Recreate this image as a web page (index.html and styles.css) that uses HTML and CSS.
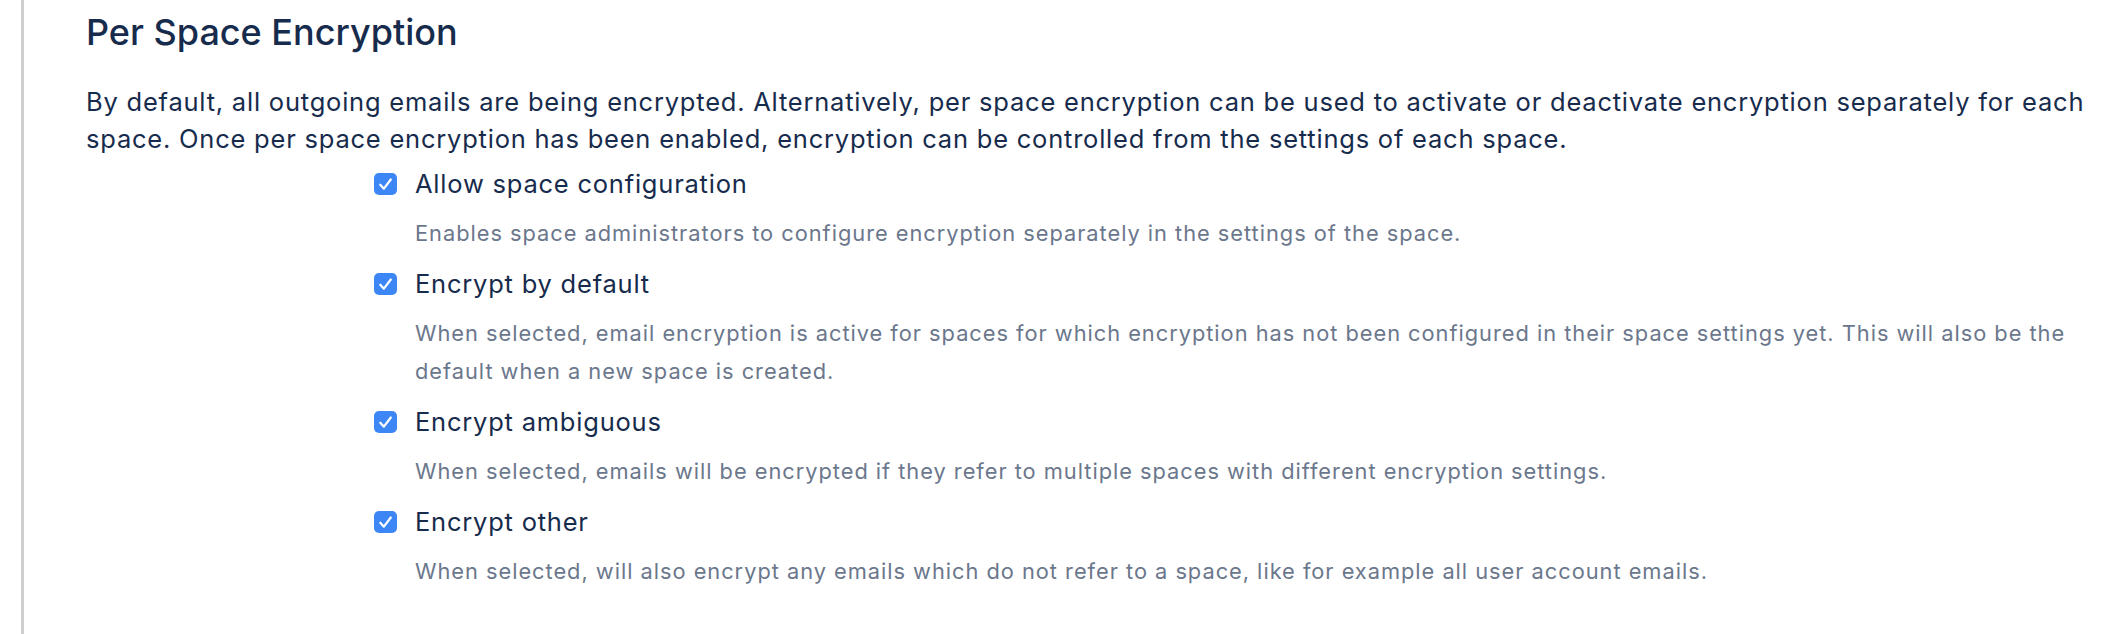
FILE: index.html
```html
<!DOCTYPE html>
<html lang="en">
<head>
    <meta charset="UTF-8">
    <title>Per Space Encryption</title>
    <link rel="stylesheet" href="styles.css">
</head>
<body>
    <div class="page">
        <div class="content">
            <h2>Per Space Encryption</h2>
            <p class="intro">By default, all outgoing emails are being encrypted. Alternatively, per space encryption can be used to activate or deactivate encryption separately for each space. Once per space encryption has been enabled, encryption can be controlled from the settings of each space.</p>

            <fieldset class="options">
                <div class="option">
                    <div class="option-row">
                        <span class="checkbox"><svg viewBox="0 0 24 24"><path d="M6.3 12.8l3.9 4.3 7.6-10"/></svg></span>
                        <label>Allow space configuration</label>
                    </div>
                    <div class="description">Enables space administrators to configure encryption separately in the settings of the space.</div>
                </div>
                <div class="option">
                    <div class="option-row">
                        <span class="checkbox"><svg viewBox="0 0 24 24"><path d="M6.3 12.8l3.9 4.3 7.6-10"/></svg></span>
                        <label>Encrypt by default</label>
                    </div>
                    <div class="description">When selected, email encryption is active for spaces for which encryption has not been configured in their space settings yet. This will also be the default when a new space is created.</div>
                </div>
                <div class="option">
                    <div class="option-row">
                        <span class="checkbox"><svg viewBox="0 0 24 24"><path d="M6.3 12.8l3.9 4.3 7.6-10"/></svg></span>
                        <label>Encrypt ambiguous</label>
                    </div>
                    <div class="description">When selected, emails will be encrypted if they refer to multiple spaces with different encryption settings.</div>
                </div>
                <div class="option">
                    <div class="option-row">
                        <span class="checkbox"><svg viewBox="0 0 24 24"><path d="M6.3 12.8l3.9 4.3 7.6-10"/></svg></span>
                        <label>Encrypt other</label>
                    </div>
                    <div class="description">When selected, will also encrypt any emails which do not refer to a space, like for example all user account emails.</div>
                </div>
            </fieldset>
        </div>
    </div>
</body>
</html>
```

FILE: styles.css
```css
html, body {
    height: 100%;
}

body {
    margin: 0;
    background-color: #fff;
    font-family: Inter, "Noto Sans", sans-serif;
    color: #172b4d;
}

.page {
    height: 100%;
    padding-left: 21px;
}

.content {
    height: 100%;
    box-sizing: border-box;
    border-left: 3px solid #cfcfcf;
    padding: 11px 12px 0 62px;
}

h2 {
    margin: 0;
    font-size: 36px;
    line-height: 43px;
    font-weight: 500;
}

.intro {
    margin: 29px 0 0;
    font-size: 25.5px;
    line-height: 37px;
    letter-spacing: 0.78px;
}

.options {
    margin: 9px 0 0;
    padding: 0 0 0 288px;
    border: none;
}

.option {
    margin-bottom: 14px;
}

.option-row {
    display: flex;
    align-items: center;
    gap: 18px;
}

.checkbox {
    flex: none;
    width: 23px;
    height: 22px;
    border-radius: 5px;
    background-color: #3d86f5;
}

.checkbox svg {
    display: block;
    width: 23px;
    height: 22px;
    fill: none;
    stroke: #fff;
    stroke-width: 2.4;
    stroke-linecap: round;
    stroke-linejoin: round;
}

label {
    font-size: 25.5px;
    line-height: 36px;
    letter-spacing: 0.78px;
}

.description {
    margin: 12px 0 0 41px;
    font-size: 21.8px;
    line-height: 38px;
    letter-spacing: 0.98px;
    color: #6b778c;
}
```
